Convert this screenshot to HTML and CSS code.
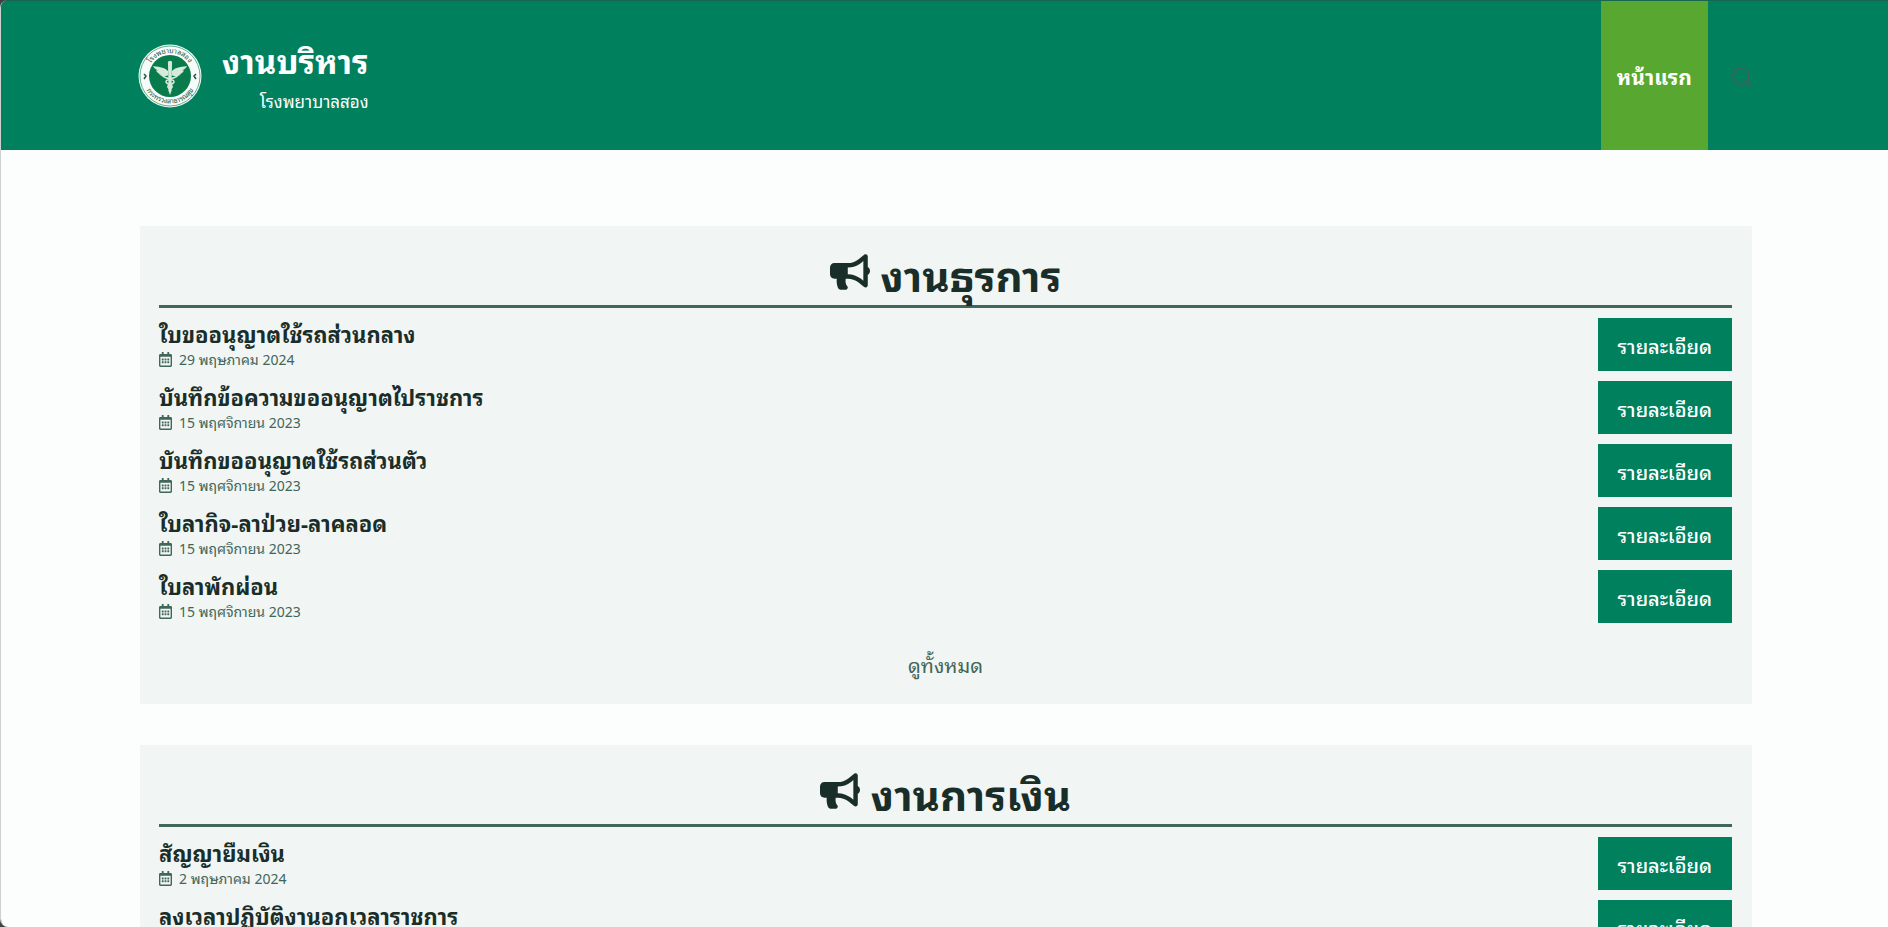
FILE: index.html
```html
<!DOCTYPE html>
<html lang="th">
<head>
<meta charset="utf-8">
<meta name="viewport" content="width=device-width, initial-scale=1">
<title>งานบริหาร</title>
<link rel="stylesheet" href="styles.css">
</head>
<body>
<svg class="sprite" aria-hidden="true">
  <symbol id="calendar" viewBox="0 0 448 512"><path d="M148 288h-40c-6.600 0-12-5.400-12-12v-40c0-6.600 5.400-12 12-12h40c6.600 0 12 5.400 12 12v40c0 6.600-5.400 12-12 12zm108-12v-40c0-6.600-5.400-12-12-12h-40c-6.600 0-12 5.400-12 12v40c0 6.600 5.400 12 12 12h40c6.600 0 12-5.400 12-12zm96 0v-40c0-6.600-5.400-12-12-12h-40c-6.600 0-12 5.400-12 12v40c0 6.600 5.400 12 12 12h40c6.600 0 12-5.400 12-12zm-96 96v-40c0-6.600-5.400-12-12-12h-40c-6.600 0-12 5.400-12 12v40c0 6.600 5.400 12 12 12h40c6.600 0 12-5.400 12-12zm-96 0v-40c0-6.600-5.400-12-12-12h-40c-6.600 0-12 5.400-12 12v40c0 6.600 5.400 12 12 12h40c6.600 0 12-5.400 12-12zm192 0v-40c0-6.600-5.400-12-12-12h-40c-6.600 0-12 5.400-12 12v40c0 6.600 5.400 12 12 12h40c6.600 0 12-5.400 12-12zm96-260v352c0 26.500-21.500 48-48 48H48c-26.500 0-48-21.500-48-48V112c0-26.500 21.500-48 48-48h48V12c0-6.600 5.400-12 12-12h40c6.600 0 12 5.400 12 12v52h128V12c0-6.600 5.400-12 12-12h40c6.600 0 12 5.400 12 12v52h48c26.500 0 48 21.500 48 48zm-48 346V160H48v298c0 3.300 2.700 6 6 6h340c3.300 0 6-2.700 6-6z"/></symbol>
  <symbol id="bullhorn" viewBox="0 0 576 512"><path d="M576 240c0-23.630-12.950-44.040-32-55.120V32.010C544 23.260 537.020 0 512 0c-7.120 0-14.190 2.380-19.980 7.020l-85.030 68.030C364.280 109.190 310.660 128 256 128H64c-35.350 0-64 28.650-64 64v96c0 35.350 28.650 64 64 64h33.700c-1.390 10.480-2.180 21.140-2.180 32 0 39.770 9.260 77.350 25.560 110.940 5.190 10.690 16.520 17.060 28.400 17.060h74.280c26.050 0 41.690-29.840 25.900-50.560-16.400-21.520-26.150-48.360-26.150-77.440 0-11.110 1.620-21.790 4.410-32H256c54.660 0 108.280 18.810 150.980 52.950l85.030 68.030a32.023 32.023 0 0 0 19.980 7.020c24.920 0 32-22.780 32-32V295.130C563.050 284.040 576 263.630 576 240zm-96 141.420l-33.050-26.440C392.950 311.780 325.120 288 256 288v-96c69.120 0 136.950-23.780 190.950-66.980L480 98.580v282.840z"/></symbol>
</svg>
<div class="page">
  <header class="header">
    <a class="brand" href="#">
      <svg class="logo" viewBox="0 0 64 64" role="img" aria-label="โรงพยาบาลสอง">
        <defs>
          <path id="arc-top" d="M9 32a23 23 0 0 1 46 0"/>
          <path id="arc-bottom" d="M4.500 32a27.500 27.500 0 0 0 55 0"/>
        </defs>
        <circle cx="32" cy="32" r="31.500" fill="#f6fcf9"/>
        <circle cx="32" cy="32" r="30" fill="none" stroke="#3d9873" stroke-width=".8"/>
        <circle cx="32" cy="32" r="21" fill="#087a4b"/>
        <g class="logo-text" text-anchor="middle">
          <text><textPath href="#arc-top" startOffset="50%">โรงพยาบาลสอง</textPath></text>
          <text><textPath href="#arc-bottom" startOffset="50%">กระทรวงสาธารณสุข</textPath></text>
        </g>
        <path d="M6 30l2 2-2 3M58 30l-2 2 2 3" fill="none" stroke="#28513b" stroke-width="1.500"/>
        <g fill="#d5eadc">
          <circle cx="32" cy="19" r="2.200"/>
          <path d="M30 20h4l-.6 27L32 51l-1.400-4z"/>
          <path d="M30 27c-3-3-7-4-15-5 1 2 3 4 5 4.500h-2c1 2 3 3.500 5 4h-2c2 1.500 5 2 9 1zM34 27c3-3 7-4 15-5-1 2-3 4-5 4.500h2c-1 2-3 3.500-5 4h2c-2 1.500-5 2-9 1z"/>
        </g>
        <path d="M25 29c-4 6 12 5 11 9-1 3-7 2-6 5l3 4M39 29c4 6-12 5-11 9 1 3 7 2 6 5l-3 4" fill="none" stroke="#d5eadc" stroke-width="1.700"/>
      </svg>
      <span class="brand-text">
        <span class="brand-title">งานบริหาร</span>
        <span class="brand-sub">โรงพยาบาลสอง</span>
      </span>
    </a>
    <nav class="nav">
      <a class="nav-link" href="#">หน้าแรก</a>
      <button class="search" type="button" aria-label="ค้นหา">
        <svg viewBox="0 0 20 20"><circle cx="9" cy="9" r="8"/><path d="M14 14l5 5"/></svg>
      </button>
    </nav>
  </header>
  <main class="main">
    <section class="card">
      <h2 class="card-title"><svg class="horn"><use href="#bullhorn"/></svg><span>งานธุรการ</span></h2>
      <ul class="list">
        <li class="row"><div><h3 class="name">ใบขออนุญาตใช้รถส่วนกลาง</h3><p class="date"><svg class="cal"><use href="#calendar"/></svg>29 พฤษภาคม 2024</p></div><a class="button" href="#">รายละเอียด</a></li>
        <li class="row"><div><h3 class="name">บันทึกข้อความขออนุญาตไปราชการ</h3><p class="date"><svg class="cal"><use href="#calendar"/></svg>15 พฤศจิกายน 2023</p></div><a class="button" href="#">รายละเอียด</a></li>
        <li class="row"><div><h3 class="name">บันทึกขออนุญาตใช้รถส่วนตัว</h3><p class="date"><svg class="cal"><use href="#calendar"/></svg>15 พฤศจิกายน 2023</p></div><a class="button" href="#">รายละเอียด</a></li>
        <li class="row"><div><h3 class="name">ใบลากิจ-ลาป่วย-ลาคลอด</h3><p class="date"><svg class="cal"><use href="#calendar"/></svg>15 พฤศจิกายน 2023</p></div><a class="button" href="#">รายละเอียด</a></li>
        <li class="row"><div><h3 class="name">ใบลาพักผ่อน</h3><p class="date"><svg class="cal"><use href="#calendar"/></svg>15 พฤศจิกายน 2023</p></div><a class="button" href="#">รายละเอียด</a></li>
      </ul>
      <a class="more" href="#">ดูทั้งหมด</a>
    </section>
    <section class="card">
      <h2 class="card-title"><svg class="horn"><use href="#bullhorn"/></svg><span>งานการเงิน</span></h2>
      <ul class="list">
        <li class="row"><div><h3 class="name">สัญญายืมเงิน</h3><p class="date"><svg class="cal"><use href="#calendar"/></svg>2 พฤษภาคม 2024</p></div><a class="button" href="#">รายละเอียด</a></li>
        <li class="row"><div><h3 class="name">ลงเวลาปฏิบัติงานอกเวลาราชการ</h3></div><a class="button" href="#">รายละเอียด</a></li>
      </ul>
    </section>
  </main>
</div>
</body>
</html>
```
FILE: styles.css
```css
* { box-sizing: border-box; }
html { background: #3c4244; }
body { margin: 0; font-family: "Noto Sans Thai Looped", "Noto Sans", sans-serif; font-size: 20px; color: #1a2e29; }
h2, h3, p, ul { margin: 0; padding: 0; }
a { color: inherit; text-decoration: none; }
.sprite { display: none; }
.page {
  height: 100vh;
  overflow-y: auto;
  scrollbar-width: none;
  background: #fcfefd;
  border-left: 1px solid #cdd2d0;
  border-radius: 8px 0 0 8px;
}
.header {
  display: flex;
  justify-content: space-between;
  height: 150px;
  padding: 0 136px 0 137px;
  background: #00805d;
  border-top: 1px solid #176650;
  color: #fff;
}
.brand { display: flex; align-items: center; gap: 20px; }
.logo { width: 64px; height: 64px; }
.logo-text { font-size: 7px; fill: #28513b; }
.brand-text { display: flex; flex-direction: column; align-items: flex-end; gap: 8px; }
.brand-title { font-size: 33px; font-weight: 700; line-height: 42px; }
.brand-sub { font-size: 17px; line-height: 24px; }
.nav { display: flex; }
.nav-link { display: flex; align-items: center; padding: 0 16px; background: #57a730; font-size: 21px; font-weight: 700; }
.search { display: flex; align-items: center; padding: 2px 0 0 24px; border: 0; background: none; }
.search svg { width: 20px; height: 20px; fill: none; stroke: #3a6659; stroke-width: 2; }
.main { display: flex; flex-direction: column; gap: 41px; padding: 76px 136px 40px 139px; }
.card { padding: 20px 20px 19px 19px; background: #f1f5f4; }
.card-title {
  display: flex;
  align-items: flex-start;
  justify-content: center;
  gap: 11px;
  height: 62px;
  border-bottom: 3px solid #41665a;
  font-size: 42px;
  line-height: 54px;
}
.horn { width: 40px; height: 36px; margin-top: 8px; fill: #1a2e29; }
.list { display: flex; flex-direction: column; gap: 10px; padding-top: 10px; list-style: none; }
.row { display: flex; justify-content: space-between; height: 53px; }
.name { font-size: 22px; line-height: 30px; }
.date { display: flex; align-items: center; gap: 7px; font-size: 14px; line-height: 22px; color: #41665a; }
.cal { width: 13px; height: 15px; fill: #41665a; }
.button { display: flex; align-items: center; padding: 0 20px; background: #00805d; color: #fff; font-weight: 500; }
.more { display: block; padding: 25px 0 5px; color: #41665a; line-height: 32px; text-align: center; }
```
